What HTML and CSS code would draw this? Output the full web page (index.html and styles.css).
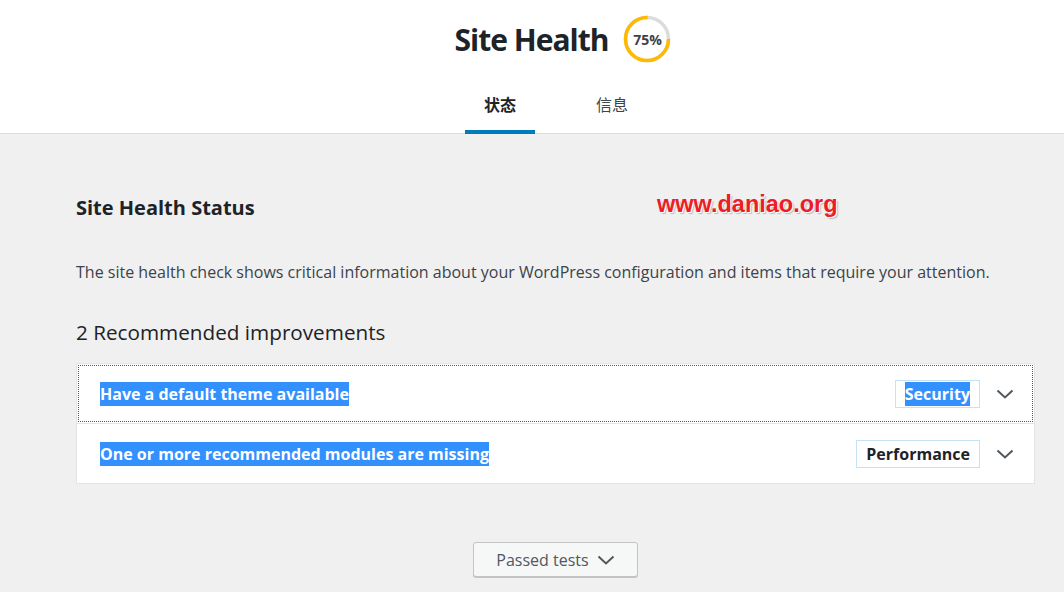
FILE: index.html
```html
<!DOCTYPE html>
<html lang="en">
<head>
<meta charset="utf-8">
<title>Site Health</title>
<link rel="stylesheet" href="styles.css">
</head>
<body>
<header class="hc-header">
  <div class="title-row">
    <h1 class="title">Site Health</h1>
    <div class="score">
      <svg class="score-ring" width="48" height="48" viewBox="0 0 48 48">
        <circle cx="24" cy="24" r="21.5" fill="none" stroke="#dcdcde" stroke-width="3.5"/>
        <circle cx="24" cy="24" r="21.5" fill="none" stroke="#ffb900" stroke-width="3.5" stroke-dasharray="101.3 135.1"/>
      </svg>
      <span class="score-text">75%</span>
    </div>
  </div>
  <nav class="tabs">
    <a class="tab active">状态</a>
    <a class="tab">信息</a>
  </nav>
</header>
<main class="content">
  <div class="status-row">
    <h2 class="status-title">Site Health Status</h2>
    <span class="watermark">www.daniao.org</span>
  </div>
  <p class="desc">The site health check shows critical information about your WordPress configuration and items that require your attention.</p>
  <h3 class="count">2 Recommended improvements</h3>
  <div class="accordion">
    <div class="item focused">
      <span class="item-title"><span class="sel">Have a default theme available</span></span>
      <span class="badge"><span class="sel">Security</span></span>
      <svg class="chev" width="18" height="12" viewBox="0 0 18 12"><path d="M1.5 2.5 L9 9.5 L16.5 2.5" fill="none" stroke="#50575e" stroke-width="2"/></svg>
    </div>
    <div class="item">
      <span class="item-title"><span class="sel">One or more recommended modules are missing</span></span>
      <span class="badge">Performance</span>
      <svg class="chev" width="18" height="12" viewBox="0 0 18 12"><path d="M1.5 2.5 L9 9.5 L16.5 2.5" fill="none" stroke="#50575e" stroke-width="2"/></svg>
    </div>
  </div>
  <div class="passed-wrap">
    <button class="passed">Passed tests
      <svg class="chev-s" width="18" height="12" viewBox="0 0 18 12"><path d="M1.5 2.5 L9 9.5 L16.5 2.5" fill="none" stroke="#50575e" stroke-width="2"/></svg>
    </button>
  </div>
</main>
</body>
</html>
```
FILE: styles.css
```css
* { box-sizing: border-box; }
html, body { margin: 0; padding: 0; }
body {
  background: #f0f0f0;
  font-family: "Open Sans", "Noto Sans CJK SC", sans-serif;
  color: #1d2327;
  width: 1064px;
  height: 592px;
  overflow: hidden;
}
.hc-header {
  background: #fff;
  border-bottom: 1px solid #dcdcde;
  height: 134px;
  display: flex;
  flex-direction: column;
  align-items: center;
}
.title-row {
  display: flex;
  align-items: center;
  gap: 15px;
  margin-top: 15px;
  height: 48px;
  margin-left: 62px;
}
.title {
  margin: 0;
  font-size: 30px;
  font-weight: 700;
  color: #1d2327;
  letter-spacing: -1px;
}
.score {
  position: relative;
  width: 48px;
  height: 48px;
}
.score-ring { display: block; }
.score-text {
  position: absolute;
  inset: 0;
  display: flex;
  align-items: center;
  justify-content: center;
  font-size: 14px;
  font-weight: 700;
  color: #3c434a;
}
.tabs {
  display: flex;
  gap: 42px;
  margin-top: 23px;
  margin-left: 48px;
}
.tab {
  display: block;
  padding: 0 19px;
  height: 48px;
  line-height: 37px;
  font-family: "Noto Sans CJK SC", sans-serif;
  font-size: 16px;
  color: #3c434a;
  border-bottom: 4px solid transparent;
}
.tab.active {
  border-bottom-color: #007cba;
  font-weight: 700;
  color: #1d2327;
}
.content {
  padding: 0 29px 0 76px;
}
.status-row {
  display: flex;
  align-items: center;
  margin-top: 56px;
  height: 34px;
}
.status-title {
  margin: 0;
  font-size: 20px;
  font-weight: 700;
  width: 581px;
}
.watermark {
  font-family: "Liberation Sans", Arial, sans-serif;
  font-weight: 700;
  font-size: 23.5px;
  color: #ee1c25;
  text-shadow: 1px 1px 0 #fff, 2px 2px 1px #bbb;
  margin-top: -6px;
}
.desc {
  margin: 36px 0 0;
  font-size: 16px;
  line-height: 24px;
  color: #3c434a;
}
.count {
  margin: 35px 0 0;
  font-size: 20.7px;
  font-weight: 400;
  line-height: 26px;
}
.accordion {
  margin-top: 18px;
  background: #fff;
  border: 1px solid #e2e4e7;
  width: 959px;
}
.item {
  display: flex;
  align-items: center;
  height: 60px;
  padding: 0 20px 0 23px;
}
.item + .item { border-top: 1px solid #e2e4e7; height: 60px; }
.item.focused { outline: 1px dotted #50575e; outline-offset: -2px; height: 59px; }
.item-title {
  flex: 1;
  font-size: 16px;
  font-weight: 700;
  color: #1d2327;
}
.sel {
  background: #3390ff;
  color: #fff;
  padding: 1px 0;
}
.badge {
  border: 1px solid #c5e4f3;
  padding: 2px 9px;
  font-size: 16px;
  font-weight: 700;
  height: 28px;
  line-height: 22px;
  color: #1d2327;
}
.chev { margin-left: 16px; }
.passed-wrap {
  display: flex;
  justify-content: center;
  margin-top: 58px;
}
.passed {
  font-family: "Open Sans", sans-serif;
  font-size: 16px;
  color: #50575e;
  background: #f6f7f7;
  border: 1px solid #c3c4c7;
  border-radius: 3px;
  box-shadow: 0 1px 0 #c3c4c7;
  width: 165px;
  height: 35px;
  display: flex;
  align-items: center;
  justify-content: center;
  gap: 8px;
}
```
